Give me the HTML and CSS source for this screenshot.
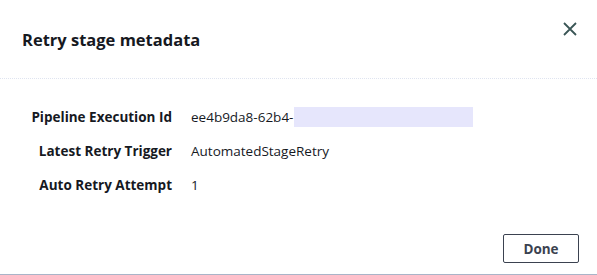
FILE: index.html
```html
<!DOCTYPE html>
<html lang="en">
<head>
<meta charset="utf-8">
<title>Retry stage metadata</title>
<link rel="stylesheet" href="styles.css">
</head>
<body>
<div class="modal">
  <div class="modal-header">
    <h2 class="modal-title">Retry stage metadata</h2>
    <button class="close-btn" aria-label="Close">
      <svg width="14" height="14" viewBox="0 0 14 14"><path d="M1 1 L13 13 M13 1 L1 13" stroke="#3a5656" stroke-width="1.8" fill="none"/></svg>
    </button>
  </div>
  <div class="modal-body">
    <dl class="meta">
      <dt>Pipeline Execution Id</dt>
      <dd><span>ee4b9da8-62b4-</span><span class="redacted"></span></dd>
      <dt>Latest Retry Trigger</dt>
      <dd>AutomatedStageRetry</dd>
      <dt>Auto Retry Attempt</dt>
      <dd>1</dd>
    </dl>
  </div>
  <div class="modal-footer">
    <button class="done-btn">Done</button>
  </div>
</div>
</body>
</html>
```
FILE: styles.css
```css
html, body {
  margin: 0;
  padding: 0;
  background: #fff;
}
body {
  font-family: "Open Sans", "Noto Sans", sans-serif;
  color: #16191f;
}
.modal {
  width: 597px;
  height: 274px;
  display: flex;
  flex-direction: column;
  border-bottom: 1px solid #a9b4c8;
}
.modal-header {
  height: 79px;
  box-sizing: border-box;
  border-bottom: 1px dotted #dfe4f0;
  display: flex;
  justify-content: space-between;
  align-items: flex-start;
  padding: 21px 19px 0 22px;
}
.modal-title {
  margin: 8px 0 0;
  font-size: 16.5px;
  line-height: 22px;
  font-weight: 700;
  color: #16191f;
}
.close-btn {
  border: none;
  background: none;
  padding: 0;
  width: 16px;
  height: 16px;
  display: flex;
  align-items: center;
  justify-content: center;
  cursor: pointer;
}
.modal-body {
  padding: 28px 0 0 0;
}
.meta {
  margin: 0;
  display: grid;
  grid-template-columns: 172px auto;
  column-gap: 19px;
  row-gap: 14px;
  font-size: 13.5px;
  line-height: 20px;
}
.meta dt {
  text-align: right;
  font-weight: 700;
  color: #16191f;
}
.meta dd {
  margin: 0;
  display: flex;
  align-items: center;
  color: #16191f;
}
.redacted {
  display: inline-block;
  width: 179px;
  height: 20px;
  margin-left: 1px;
  background: #e6e6fc;
}
.modal-footer {
  margin-top: auto;
  display: flex;
  justify-content: flex-end;
  padding: 0 18px 11px 0;
}
.done-btn {
  width: 76px;
  height: 29px;
  box-sizing: border-box;
  border: 1px solid #3b4250;
  border-radius: 2px;
  background: #fff;
  font-family: inherit;
  font-size: 13.5px;
  font-weight: 700;
  color: #3b4250;
  padding: 0;
}
```
